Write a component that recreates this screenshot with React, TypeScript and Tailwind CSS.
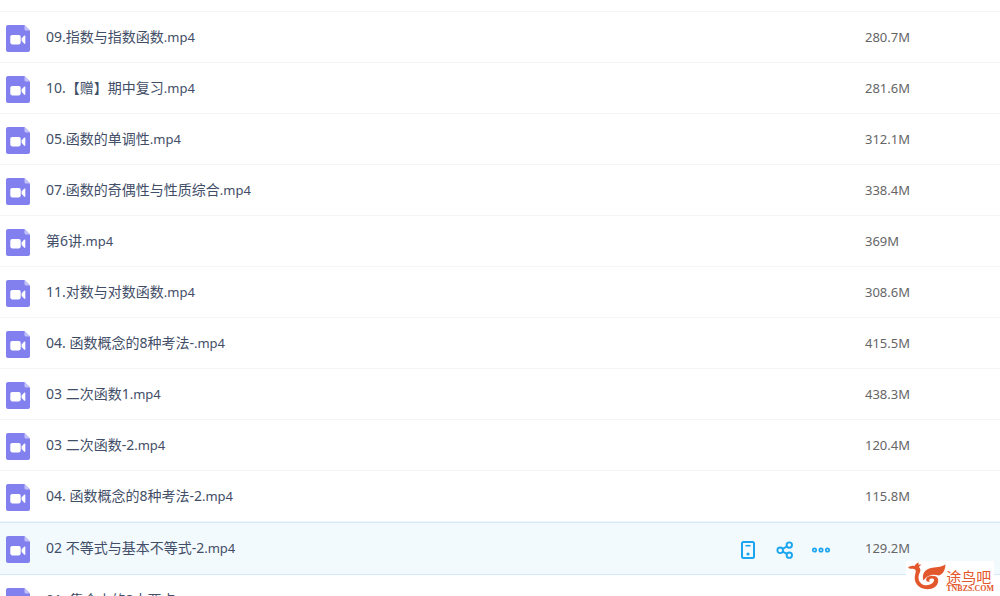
type VideoFile = {
  title: string;
  size: string;
  active?: boolean;
};

const files: VideoFile[] = [
  { title: '09.指数与指数函数', size: '280.7M' },
  { title: '10.【赠】期中复习', size: '281.6M' },
  { title: '05.函数的单调性', size: '312.1M' },
  { title: '07.函数的奇偶性与性质综合', size: '338.4M' },
  { title: '第6讲', size: '369M' },
  { title: '11.对数与对数函数', size: '308.6M' },
  { title: '04. 函数概念的8种考法-', size: '415.5M' },
  { title: '03 二次函数1', size: '438.3M' },
  { title: '03 二次函数-2', size: '120.4M' },
  { title: '04. 函数概念的8种考法-2', size: '115.8M' },
  { title: '02 不等式与基本不等式-2', size: '129.2M', active: true },
  { title: '01. 集合中的8大要点', size: '298.9M' },
];

function VideoIcon() {
  return (
    <svg className="block shrink-0" width="24" height="27" viewBox="0 0 24 27" aria-hidden="true">
      <path d="M2 0h16.5L24 5.5V25a2 2 0 0 1-2 2H2a2 2 0 0 1-2-2V2a2 2 0 0 1 2-2z" fill="#8280ee" />
      <path d="M18.5 0 24 5.5h-4a1.5 1.5 0 0 1-1.5-1.5z" fill="#c3c2fa" />
      <rect x="4.3" y="10" width="10.4" height="9.4" rx="1.8" fill="#fff" />
      <path d="M15.6 13.6 18 10.8q1.3-1 1.3.4v7q0 1.4-1.3.4l-2.4-2.8z" fill="#fff" />
    </svg>
  );
}

function RowActions() {
  return (
    <div className="flex items-center gap-4 text-[#1aa5ee]">
      <button type="button" aria-label="Send to device" className="size-5">
        <svg width="20" height="20" viewBox="0 0 20 20" fill="none" stroke="currentColor" strokeWidth="2">
          <rect x="4" y="2" width="12" height="16" rx="1.5" />
          <path d="M7.5 5.7h5" strokeWidth="1.6" />
          <circle cx="10" cy="14" r="1.6" fill="currentColor" stroke="none" />
        </svg>
      </button>
      <button type="button" aria-label="Share" className="size-5">
        <svg width="20" height="20" viewBox="0 0 20 20" fill="none" stroke="currentColor" strokeWidth="1.9">
          <circle cx="6.2" cy="10.3" r="2.8" />
          <circle cx="15.3" cy="5.1" r="2.7" />
          <circle cx="15.3" cy="15.2" r="2.7" />
          <path d="m8.7 8.9 4.2-2.4M8.6 11.7l4.4 2.2" />
        </svg>
      </button>
      <button type="button" aria-label="More" className="size-5">
        <svg width="20" height="20" viewBox="0 0 20 20" fill="none" stroke="currentColor" strokeWidth="1.7">
          <circle cx="4.5" cy="10" r="1.7" />
          <circle cx="11" cy="10" r="1.7" />
          <circle cx="17.5" cy="10" r="1.7" />
        </svg>
      </button>
    </div>
  );
}

function FileRow({ file }: { file: VideoFile }) {
  return (
    <tr
      className={
        file.active
          ? 'h-[53px] bg-[#f3fafe] *:border-y *:border-[#d3e9f6]'
          : 'h-[51px] *:border-b *:border-[#f3f5f9]'
      }
    >
      <td className="pl-[6px]">
        <div className="flex items-center gap-4 pt-[2px]">
          <VideoIcon />
          <span className="pb-[3px] whitespace-nowrap text-[#424e67]">
            {file.title}
            <span className="text-[13px]">.mp4</span>
          </span>
        </div>
      </td>
      <td className="w-[127px] pt-[3px]">{file.active && <RowActions />}</td>
      <td className="w-[135px] pb-px text-[13px] text-[#666]">{file.size}</td>
    </tr>
  );
}

function SiteMark() {
  return (
    <div className="absolute right-[6px] bottom-[3px] flex items-start bg-white text-[#e2572b]">
      <svg width="40" height="30" viewBox="0 0 40 30" fill="currentColor" aria-hidden="true">
        <path d="M2 6.5C4 5 6 4.2 8.5 5 9 3.5 10.5 2 13 1.5c-.6.9-.8 1.6-.7 2.2 1-.3 2-.2 3.2.3-2.5.5-3 2-1.5 3.5 1.500 2.500-1.500 5-1.500 9 0 4.500 3.500 8 8 7.800 4-.3 7-2.300 7.500-4.800.5-2-2.500-2.500-4-1.500-1.200.8-1 2 0 2.500-3 1-4.500-1-3.700-3 1.200-3 5.700-3.500 9.200-2.200 4 1.700 3.500 7.700-.5 10.700-6 4-15.500 2.500-19-4-2.500-5-.5-9-.2-11.500.1-2-1.800-3-3.800-2.700-1.500.2-3-.3-4-1.300z" />
        <path d="M39.500 3.500c-.5 6-2.500 9.500-6.500 11-5-1.200-11-1.500-15.500 5-2-5.500 1-11 6.500-12.300 6-1.200 10-.7 15.500-3.700z" />
      </svg>
      <div className="pt-[8px]">
        <div className="text-[15px] leading-4 whitespace-nowrap">途鸟吧</div>
        <div className="font-['Liberation_Serif',serif] text-[8px] leading-2 font-bold">TNBZS.COM</div>
      </div>
    </div>
  );
}

export default function App() {
  return (
    <main className="relative h-screen overflow-hidden bg-white pt-[11px] font-['Noto_Sans','Noto_Sans_CJK_SC',sans-serif] text-[14px] leading-5">
      <table className="w-full border-separate border-spacing-0 border-t border-[#f3f5f9]">
        <tbody>
          {files.map((file) => (
            <FileRow key={file.title} file={file} />
          ))}
        </tbody>
      </table>
      <SiteMark />
    </main>
  );
}
